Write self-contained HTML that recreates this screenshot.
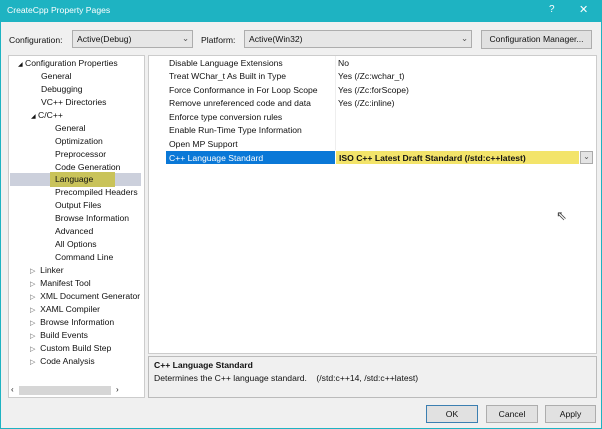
<!DOCTYPE html>
<html><head><style>
*{margin:0;padding:0;box-sizing:border-box}
body{width:602px;height:429px;background:#1eb3c2;font-family:"Liberation Sans",sans-serif;font-size:8.6px;color:#111;position:relative;overflow:hidden}
.win{position:absolute;left:1px;top:22px;width:600px;height:406px;background:#f0f0f0}
.t{position:absolute;white-space:nowrap}
.box{position:absolute;border:1px solid #adadad;background:#e6e6e6}
.btn{position:absolute;border:1px solid #adadad;background:#e1e1e1;text-align:center;line-height:17px}
</style></head><body>
<div class="t" style="left:7px;top:5px;color:#fff">CreateCpp Property Pages</div>
<div class="t" style="left:549px;top:4px;color:#fff;font-size:10px">?</div>
<div class="t" style="left:579px;top:3px;color:#fff;font-size:11px">✕</div>
<div class="win"></div>
<div class="t" style="left:9px;top:35px">Configuration:</div>
<div class="box" style="left:72px;top:30px;width:121px;height:18px"><span class="t" style="left:4px;top:3px">Active(Debug)</span><span class="t" style="left:109px;top:2px;color:#555">⌄</span></div>
<div class="t" style="left:201px;top:35px">Platform:</div>
<div class="box" style="left:244px;top:30px;width:228px;height:18px"><span class="t" style="left:4px;top:3px">Active(Win32)</span><span class="t" style="left:216px;top:2px;color:#555">⌄</span></div>
<div class="btn" style="left:481px;top:30px;width:111px;height:19px">Configuration Manager...</div>

<div style="position:absolute;left:8px;top:55px;width:137px;height:343px;background:#fff;border:1px solid #ccc"></div>
<div style="position:absolute;left:10px;top:173px;width:131px;height:13px;background:#ccd0dc"></div>
<div style="position:absolute;left:50px;top:172px;width:65px;height:15px;background:#c9c35a"></div>
<div style="position:absolute;left:19px;top:386px;width:92px;height:9px;background:#d6d6d6"></div>
<div class="t" style="left:11px;top:385px;font-size:8px">‹</div><div class="t" style="left:116px;top:385px;font-size:8px">›</div>
<div style="position:absolute;left:8px;top:55px;line-height:13px">
<div class="t" style="left:10px;top:2px"><span style="font-size:6px">◢</span> Configuration Properties</div>
<div class="t" style="left:33px;top:15px">General</div>
<div class="t" style="left:33px;top:28px">Debugging</div>
<div class="t" style="left:33px;top:41px">VC++ Directories</div>
<div class="t" style="left:23px;top:54px"><span style="font-size:6px">◢</span> C/C++</div>
<div class="t" style="left:47px;top:67px">General</div>
<div class="t" style="left:47px;top:80px">Optimization</div>
<div class="t" style="left:47px;top:93px">Preprocessor</div>
<div class="t" style="left:47px;top:106px">Code Generation</div>
<div class="t" style="left:47px;top:118px">Language</div>
<div class="t" style="left:47px;top:131px">Precompiled Headers</div>
<div class="t" style="left:47px;top:144px">Output Files</div>
<div class="t" style="left:47px;top:157px">Browse Information</div>
<div class="t" style="left:47px;top:170px">Advanced</div>
<div class="t" style="left:47px;top:183px">All Options</div>
<div class="t" style="left:47px;top:196px">Command Line</div>
<div class="t" style="left:22px;top:209px"><span style="color:#666;font-size:7px">▷</span>&nbsp; Linker</div>
<div class="t" style="left:22px;top:222px"><span style="color:#666;font-size:7px">▷</span>&nbsp; Manifest Tool</div>
<div class="t" style="left:22px;top:235px"><span style="color:#666;font-size:7px">▷</span>&nbsp; XML Document Generator</div>
<div class="t" style="left:22px;top:248px"><span style="color:#666;font-size:7px">▷</span>&nbsp; XAML Compiler</div>
<div class="t" style="left:22px;top:261px"><span style="color:#666;font-size:7px">▷</span>&nbsp; Browse Information</div>
<div class="t" style="left:22px;top:274px"><span style="color:#666;font-size:7px">▷</span>&nbsp; Build Events</div>
<div class="t" style="left:22px;top:287px"><span style="color:#666;font-size:7px">▷</span>&nbsp; Custom Build Step</div>
<div class="t" style="left:22px;top:300px"><span style="color:#666;font-size:7px">▷</span>&nbsp; Code Analysis</div>
</div>

<div style="position:absolute;left:148px;top:55px;width:449px;height:299px;background:#fff;border:1px solid #ccc"></div>
<div style="position:absolute;left:335px;top:56px;width:1px;height:94px;background:#eee"></div>
<div style="position:absolute;left:166px;top:151px;width:169px;height:13px;background:#0a78d7"></div>
<div style="position:absolute;left:336px;top:151px;width:243px;height:13px;background:#f3e46a"></div>
<div style="position:absolute;left:580px;top:151px;width:13px;height:13px;background:#e4e4e4;border:1px solid #aaa;font-size:8px;text-align:center;line-height:10px;color:#555">⌄</div>
<div class="t" style="left:169px;top:58px">Disable Language Extensions</div><div class="t" style="left:338px;top:58px">No</div>
<div class="t" style="left:169px;top:71px">Treat WChar_t As Built in Type</div><div class="t" style="left:338px;top:71px">Yes (/Zc:wchar_t)</div>
<div class="t" style="left:169px;top:85px">Force Conformance in For Loop Scope</div><div class="t" style="left:338px;top:85px">Yes (/Zc:forScope)</div>
<div class="t" style="left:169px;top:98px">Remove unreferenced code and data</div><div class="t" style="left:338px;top:98px">Yes (/Zc:inline)</div>
<div class="t" style="left:169px;top:112px">Enforce type conversion rules</div>
<div class="t" style="left:169px;top:125px">Enable Run-Time Type Information</div>
<div class="t" style="left:169px;top:139px">Open MP Support</div>
<div class="t" style="left:169px;top:153px;color:#fff">C++ Language Standard</div>
<div class="t" style="left:339px;top:153px;font-weight:bold">ISO C++ Latest Draft Standard (/std:c++latest)</div>
<div class="t" style="left:556px;top:208px;font-size:13px;color:#444">⇖</div>

<div style="position:absolute;left:148px;top:356px;width:449px;height:42px;background:#f0f0f0;border:1px solid #bbb"></div>
<div class="t" style="left:154px;top:360px;font-weight:bold">C++ Language Standard</div>
<div class="t" style="left:154px;top:373px">Determines the C++ language standard. &nbsp;&nbsp;&nbsp;(/std:c++14, /std:c++latest)</div>

<div class="btn" style="left:426px;top:405px;width:52px;height:18px;border:1px solid #3c7fb1">OK</div>
<div class="btn" style="left:486px;top:405px;width:52px;height:18px">Cancel</div>
<div class="btn" style="left:545px;top:405px;width:51px;height:18px">Apply</div>
</body></html>
